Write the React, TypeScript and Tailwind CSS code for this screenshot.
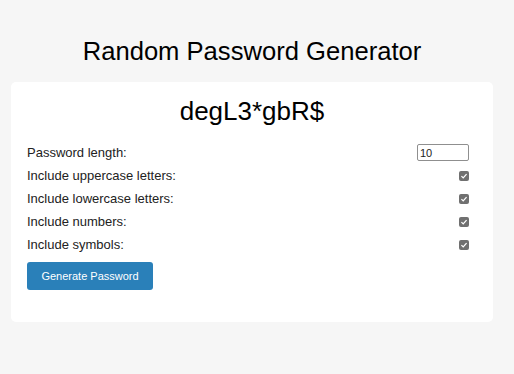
import { useState } from "react";

const Check = () => (
  <span className="flex h-[10px] w-[10px] items-center justify-center rounded-[2px] bg-[#707070]">
    <svg viewBox="0 0 10 10" className="h-[8px] w-[8px]">
      <path d="M1.8 5.2 L4 7.3 L8.2 2.6" fill="none" stroke="white" strokeWidth="1.6" />
    </svg>
  </span>
);

const rows = [
  "Include uppercase letters:",
  "Include lowercase letters:",
  "Include numbers:",
  "Include symbols:",
];

export default function App() {
  const [length, setLength] = useState("10");

  return (
    <div className="min-h-screen bg-[#f6f6f6] pt-[36px] pr-[10px] font-['Arial','Liberation_Sans',sans-serif] text-black">
      <h1 className="mb-[16px] text-center text-[25.6px] leading-[30px]">
        Random Password Generator
      </h1>
      <div className="mx-[11px] rounded-[5px] bg-white px-[16px] pt-[15px] pb-[32px]">
        <div className="mb-[16px] text-center text-[26px] leading-[28px]">degL3*gbR$</div>
        <div className="flex h-[23px] items-center justify-between text-[13px] text-[#222]">
          <span>Password length:</span>
          <input
            value={length}
            onChange={(e) => setLength(e.target.value)}
            className="mr-[8px] h-[17px] w-[52px] rounded-[2px] border border-[#8f8f8f] px-[2px] text-[11px] outline-none"
          />
        </div>
        {rows.map((label) => (
          <div
            key={label}
            className="flex h-[23px] items-center justify-between text-[13px] text-[#222]"
          >
            <span>{label}</span>
            <span className="mr-[8px]">
              <Check />
            </span>
          </div>
        ))}
        <button className="mt-[6px] h-[28px] w-[126px] rounded-[3px] bg-[#2a80b9] text-[11px] text-white">
          Generate Password
        </button>
      </div>
    </div>
  );
}
